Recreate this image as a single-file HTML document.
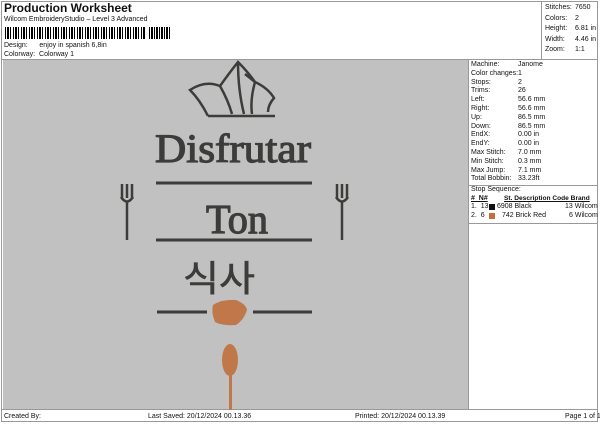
<!DOCTYPE html><html><head><style>
body{margin:0;width:600px;height:424px;background:#fff;font-family:"Liberation Sans",sans-serif;position:relative;overflow:hidden;color:#111}
.a{position:absolute;white-space:nowrap}
.s{font-size:7px}
</style></head><body>
<div class="a" style="left:1px;top:1px;width:597px;height:421px;border:1px solid #999;box-sizing:border-box"></div>
<div class="a" style="left:1px;top:59px;width:597px;height:1px;background:#999"></div>
<div class="a" style="left:541px;top:1px;width:1px;height:58px;background:#999"></div>
<div class="a" style="left:4px;top:1px;font-size:12px;font-weight:bold">Production Worksheet</div>
<div class="a s" style="left:4px;top:16px">Wilcom EmbroideryStudio – Level 3 Advanced</div>
<div class="a" style="left:5px;top:27px;width:140px;height:12px;background:repeating-linear-gradient(90deg,#000 0 1px,#fff 1px 2px,#000 2px 4px,#fff 4px 5px,#000 5px 6px,#fff 6px 8px)"></div>
<div class="a" style="left:149px;top:27px;width:22px;height:12px;background:repeating-linear-gradient(90deg,#000 0 1px,#fff 1px 2px,#000 2px 4px,#fff 4px 5px)"></div>
<div class="a s" style="left:4px;top:42px">Design:&nbsp;&nbsp;&nbsp;&nbsp;&nbsp;&nbsp;enjoy in spanish 6,8in</div>
<div class="a s" style="left:4px;top:51px">Colorway:&nbsp; Colorway 1</div>
<div class="a s" style="left:545px;top:3px;line-height:10.5px">Stitches:<br>Colors:<br>Height:<br>Width:<br>Zoom:</div>
<div class="a s" style="left:575px;top:3px;line-height:10.5px">7650<br>2<br>6.81 in<br>4.46 in<br>1:1</div>
<div class="a" style="left:3px;top:60px;width:465px;height:349px;background:#c1c1c1"></div>
<div class="a" style="left:468px;top:60px;width:1px;height:349px;background:#999"></div>
<div class="a" style="left:1px;top:409px;width:597px;height:1px;background:#999"></div>
<div class="a s" style="left:471px;top:61px;line-height:8.8px">Machine:<br>Color changes:<br>Stops:<br>Trims:<br>Left:<br>Right:<br>Up:<br>Down:<br>EndX:<br>EndY:<br>Max Stitch:<br>Min Stitch:<br>Max Jump:<br>Total Bobbin:</div>
<div class="a s" style="left:518px;top:61px;line-height:8.8px">Janome<br>1<br>2<br>26<br>56.6 mm<br>56.6 mm<br>86.5 mm<br>86.5 mm<br>0.00 in<br>0.00 in<br>7.0 mm<br>0.3 mm<br>7.1 mm<br>33.23ft</div>
<div class="a" style="left:469px;top:185px;width:129px;height:1px;background:#999"></div>
<div class="a s" style="left:471px;top:186px">Stop Sequence:</div>
<div class="a s" style="left:471px;top:195px;font-weight:bold;text-decoration:underline">#&nbsp; N#</div>
<div class="a s" style="left:504px;top:195px;font-weight:bold;text-decoration:underline;font-size:6.6px">St. Description Code Brand</div>
<div class="a s" style="left:471px;top:203px">1.&nbsp; 13</div>
<div class="a" style="left:489px;top:204px;width:6px;height:6px;background:#111"></div>
<div class="a s" style="left:497px;top:203px">6908 Black</div>
<div class="a s" style="left:565px;top:203px">13 Wilcom</div>
<div class="a s" style="left:471px;top:212px">2.&nbsp; 6</div>
<div class="a" style="left:489px;top:213px;width:6px;height:6px;background:#c0703a"></div>
<div class="a s" style="left:502px;top:212px">742 Brick Red</div>
<div class="a s" style="left:569px;top:212px">6 Wilcom</div>
<div class="a" style="left:469px;top:223px;width:129px;height:1px;background:#999"></div>
<div class="a s" style="left:4px;top:413px">Created By:</div>
<div class="a s" style="left:148px;top:413px">Last Saved: 20/12/2024 00.13.36</div>
<div class="a s" style="left:355px;top:413px">Printed: 20/12/2024 00.13.39</div>
<div class="a s" style="left:565px;top:413px">Page 1 of 1</div>
<svg class="a" style="left:0;top:0" width="600" height="424">
<g fill="none" stroke="#3c3c3a" stroke-width="2.5">
<path d="M208 116 L275 116 M208 116 Q200 100 190 90 Q205 80 220 86 Q230 72 238 62 Q248 72 255 82 Q268 88 274 98 Q268 105 268 112 M220 86 Q228 100 232 114 M238 62 Q238 90 244 114 M255 82 Q250 100 252 114 M245 74 L255 82"/>
<path d="M156 183 H312 M156 240 H312" stroke-width="3"/>
<path d="M157 312 H207 M253 312 H312" stroke-width="3"/>
<path d="M122 184 V198 M127 184 V198 M132 184 V198 M121 197 Q127 206 133 197 M127 202 V240" stroke-width="2.5"/>
<path d="M337 184 V198 M342 184 V198 M347 184 V198 M336 197 Q342 206 348 197 M342 202 V240" stroke-width="2.5"/>
</g>
<path d="M213 305 Q222 299 236 300 Q246 304 247 310 Q244 320 236 325 Q222 326 215 322 Q211 312 213 305Z" fill="#c0784a"/>
<ellipse cx="230" cy="360" rx="8" ry="16" fill="#c0784a"/>
<rect x="229" y="374" width="3" height="36" fill="#c0784a"/>
<g fill="#3c3c3a" stroke="#3c3c3a" stroke-width="1.2" font-family="Liberation Serif,serif">
<text x="155" y="162" font-size="40" textLength="156" lengthAdjust="spacingAndGlyphs">Disfrutar</text>
<text x="206" y="233" font-size="41" textLength="62" lengthAdjust="spacingAndGlyphs">Ton</text>
<text x="183" y="291" font-size="36" stroke-width="0.6" font-family="Noto Sans CJK KR,sans-serif" textLength="72" lengthAdjust="spacingAndGlyphs">식사</text>
</g>
</svg>
</body></html>
